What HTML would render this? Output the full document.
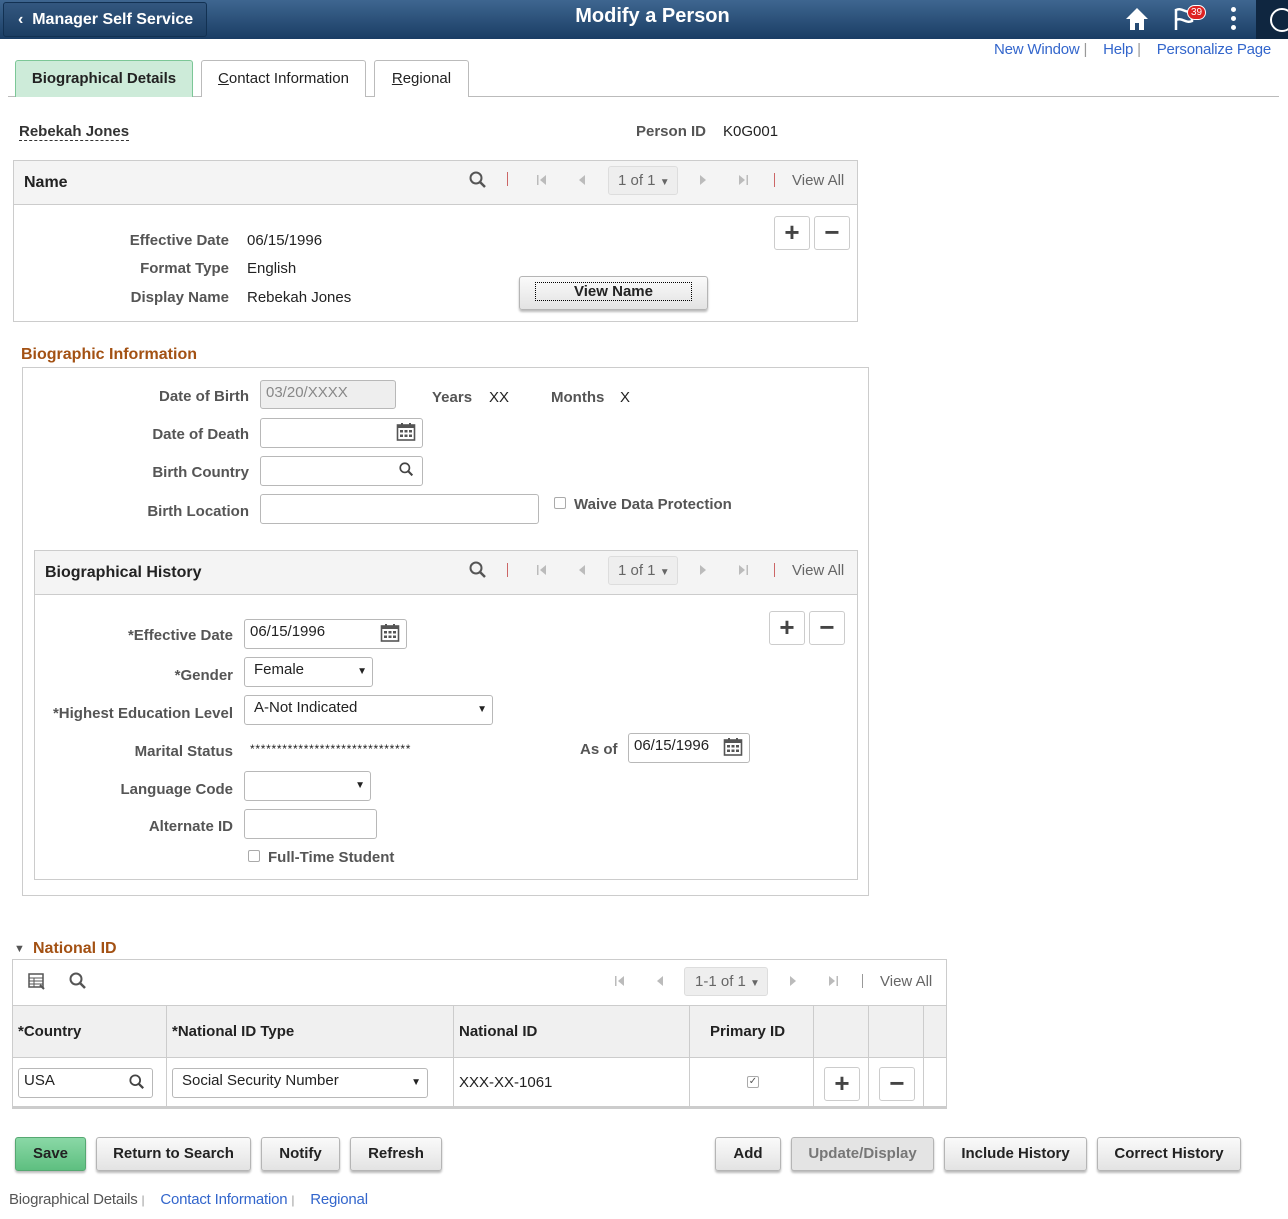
<!DOCTYPE html>
<html><head><meta charset="utf-8"><style>
*{box-sizing:border-box;margin:0;padding:0}
body{width:1288px;height:1219px;position:relative;background:#fff;font-family:"Liberation Sans",Arial,sans-serif;font-size:15px;color:#333;overflow:hidden}
.a{position:absolute}
.lb{position:absolute;font-weight:bold;color:#555;text-align:right;white-space:nowrap}
.v{position:absolute;color:#222;white-space:nowrap}
.in{position:absolute;border:1px solid #b8b8b8;border-radius:3px;background:#fff;font-size:15px;padding:3px 5px;color:#222}
.box{position:absolute;border:1px solid #ccc}
.gh{position:absolute;background:#f4f4f4;border-bottom:1px solid #ccc}
.btn{position:absolute;border:1px solid #b5b5b5;border-radius:3px;background:linear-gradient(#fafafa,#e3e3e3);font-weight:bold;color:#222;text-align:center;box-shadow:0 2px 2px #bbb;font-size:15px}
.pm{position:absolute;width:36px;height:34px;border:1px solid #ccc;border-radius:3px;background:#fff;text-align:center;font-size:26px;line-height:30px;color:#444;font-weight:bold}
.sec{position:absolute;color:#a35113;font-weight:bold;font-size:16px}
.nav{position:absolute;color:#666;font-size:15px}
.lnk{color:#3366cc}
.dd{position:absolute;background:#eee;border:1px solid #ddd;border-radius:3px;color:#666;line-height:27px;height:29px}
</style></head><body>
<svg width="0" height="0" style="position:absolute"><defs>
<symbol id="mag" viewBox="0 0 18 18"><circle cx="7" cy="7" r="5.5" stroke="currentColor" stroke-width="2" fill="none"/><path d="M11 11 L16 16" stroke="currentColor" stroke-width="2.5"/></symbol>
<symbol id="cal" viewBox="0 0 20 20"><rect x="1.5" y="3" width="17" height="15" fill="none" stroke="#555" stroke-width="1.6"/><rect x="1.5" y="3" width="17" height="3" fill="#555"/><rect x="5" y="1" width="2" height="4" fill="#555"/><rect x="13" y="1" width="2" height="4" fill="#555"/><g fill="#555"><rect x="4" y="8" width="3" height="2.5"/><rect x="8.5" y="8" width="3" height="2.5"/><rect x="13" y="8" width="3" height="2.5"/><rect x="4" y="12.5" width="3" height="2.5"/><rect x="8.5" y="12.5" width="3" height="2.5"/><rect x="13" y="12.5" width="3" height="2.5"/></g></symbol>
<symbol id="first" viewBox="0 0 14 14"><rect x="2" y="2" width="1.5" height="10" fill="#bbb"/><path d="M11 2 L5 7 L11 12Z" fill="#bbb"/></symbol>
<symbol id="prev" viewBox="0 0 14 14"><path d="M10 2 L4 7 L10 12Z" fill="#bbb"/></symbol>
<symbol id="next" viewBox="0 0 14 14"><path d="M4 2 L10 7 L4 12Z" fill="#bbb"/></symbol>
<symbol id="last" viewBox="0 0 14 14"><path d="M3 2 L9 7 L3 12Z" fill="#bbb"/><rect x="10.5" y="2" width="1.5" height="10" fill="#bbb"/></symbol>
</defs></svg>

<div class="a" style="left:0;top:0;width:1288px;height:39px;background:linear-gradient(#3e6690,#1a3d64);"></div>
<div class="a" style="left:3px;top:2px;width:204px;height:35px;border:1px solid #123152;border-radius:3px;background:linear-gradient(#33577f,#1c3e63);color:#fff;font-weight:bold;font-size:16px;line-height:33px;padding-left:14px">‹&nbsp;&nbsp;Manager Self Service</div>
<div class="a" style="left:0;width:1305px;top:5px;text-align:center;color:#fff;font-weight:bold;font-size:20px">Modify a Person</div>
<svg class="a" style="left:1124px;top:6px" width="26" height="26" viewBox="0 0 26 26"><path d="M13 2 L2 13 H6 V24 H11 V17 H15 V24 H20 V13 H24 Z" fill="#fff"/></svg>
<svg class="a" style="left:1172px;top:6px" width="24" height="26"><path d="M4 3 V24 M4 4 C10 1 14 8 20 5 V15 C14 18 10 11 4 14" stroke="#fff" stroke-width="2.5" fill="none"/></svg>
<div class="a" style="left:1187px;top:5px;background:#d22;color:#fff;font-size:10px;border-radius:8px;padding:1px 3px;border:1px solid #fff">39</div>
<div class="a" style="left:1231px;top:7px;width:6px"><div style="width:5px;height:5px;border-radius:3px;background:#fff;margin-bottom:4px"></div><div style="width:5px;height:5px;border-radius:3px;background:#fff;margin-bottom:4px"></div><div style="width:5px;height:5px;border-radius:3px;background:#fff"></div></div>
<div class="a" style="left:1256px;top:0;width:32px;height:39px;background:#0f2640"></div>
<div class="a" style="left:1270px;top:8px;width:24px;height:24px;border:2px solid #fff;border-radius:50%"></div>
<div class="a" style="left:994px;top:41px;font-size:15px;letter-spacing:-0.2px"><span class="lnk">New Window</span> <span style="color:#999">|</span>&nbsp;&nbsp;&nbsp; <span class="lnk">Help</span> <span style="color:#999">|</span>&nbsp;&nbsp;&nbsp; <span class="lnk">Personalize Page</span></div>
<div class="a" style="left:8px;top:96px;width:1271px;height:1px;background:#bbb"></div>
<div class="a" style="left:15px;top:60px;width:178px;height:37px;background:#cdebd9;border:1px solid #7cc797;border-bottom:none;border-radius:3px 3px 0 0;font-weight:bold;text-align:center;line-height:35px;color:#222">Biographical Details</div>
<div class="a" style="left:201px;top:60px;width:165px;height:37px;background:#fff;border:1px solid #bbb;border-bottom:none;border-radius:3px 3px 0 0;text-align:center;line-height:35px;color:#222"><u>C</u>ontact Information</div>
<div class="a" style="left:374px;top:60px;width:95px;height:37px;background:#fff;border:1px solid #bbb;border-bottom:none;border-radius:3px 3px 0 0;text-align:center;line-height:35px;color:#222"><u>R</u>egional</div>

<div class="a" style="left:19px;top:123px;font-weight:bold;color:#333;border-bottom:1px dashed #333">Rebekah Jones</div>
<div class="lb" style="left:636px;top:123px">Person ID</div>
<div class="v" style="left:723px;top:123px">K0G001</div>

<!-- Name grid -->
<div class="box" style="left:13px;top:160px;width:845px;height:162px"></div>
<div class="gh" style="left:14px;top:161px;width:843px;height:44px"></div>
<div class="a" style="left:24px;top:174px;font-weight:bold;font-size:16px;color:#222">Name</div>
<svg class="a" style="left:469px;top:171px;color:#555" width="18" height="18"><use href="#mag"/></svg>
<div class="a" style="left:507px;top:172px;width:1px;height:14px;background:#c66"></div>
<svg class="a" style="left:535px;top:173px" width="14" height="14"><use href="#first"/></svg>
<svg class="a" style="left:575px;top:173px" width="14" height="14"><use href="#prev"/></svg>
<div class="dd" style="left:608px;top:166px;width:70px;padding-left:9px">1 of 1 <span style="font-size:10px">▼</span></div>
<svg class="a" style="left:696px;top:173px" width="14" height="14"><use href="#next"/></svg>
<svg class="a" style="left:736px;top:173px" width="14" height="14"><use href="#last"/></svg>
<div class="a" style="left:774px;top:173px;width:1px;height:14px;background:#c66"></div>
<div class="nav" style="left:792px;top:172px">View All</div>
<div class="pm" style="left:774px;top:216px">+</div><div class="pm" style="left:814px;top:216px">−</div>
<div class="lb" style="right:1059px;top:232px">Effective Date</div><div class="v" style="left:247px;top:232px">06/15/1996</div>
<div class="lb" style="right:1059px;top:260px">Format Type</div><div class="v" style="left:247px;top:260px">English</div>
<div class="lb" style="right:1059px;top:289px">Display Name</div><div class="v" style="left:247px;top:289px">Rebekah Jones</div>
<div class="btn" style="left:519px;top:276px;width:189px;height:34px;padding-top:6px"><span style="border:1px dotted #000;padding:0 38px">View Name</span></div>

<div class="sec" style="left:21px;top:346px">Biographic Information</div>
<div class="box" style="left:22px;top:367px;width:847px;height:529px"></div>
<div class="lb" style="right:1039px;top:388px">Date of Birth</div>
<div class="in" style="left:260px;top:380px;width:136px;height:29px;background:#eee;color:#888">03/20/XXXX</div>
<div class="lb" style="left:432px;top:389px">Years</div><div class="v" style="left:489px;top:389px">XX</div>
<div class="lb" style="left:551px;top:389px">Months</div><div class="v" style="left:620px;top:389px">X</div>
<div class="lb" style="right:1039px;top:426px">Date of Death</div>
<div class="in" style="left:260px;top:418px;width:163px;height:30px"></div>
<svg class="a" style="left:396px;top:422px" width="20" height="20"><use href="#cal"/></svg>
<div class="lb" style="right:1039px;top:464px">Birth Country</div>
<div class="in" style="left:260px;top:456px;width:163px;height:30px"></div>
<svg class="a" style="left:399px;top:462px;color:#444" width="15" height="15"><use href="#mag"/></svg>
<div class="lb" style="right:1039px;top:503px">Birth Location</div>
<div class="in" style="left:260px;top:494px;width:279px;height:30px"></div>
<div class="a" style="left:554px;top:497px;width:12px;height:12px;border:1px solid #aaa;border-radius:2px"></div>
<div class="lb" style="left:574px;top:496px">Waive Data Protection</div>

<!-- Biographical History -->
<div class="box" style="left:34px;top:550px;width:824px;height:330px"></div>
<div class="gh" style="left:35px;top:551px;width:822px;height:44px"></div>
<div class="a" style="left:45px;top:564px;font-weight:bold;font-size:16px;color:#222">Biographical History</div>
<svg class="a" style="left:469px;top:561px;color:#555" width="18" height="18"><use href="#mag"/></svg>
<div class="a" style="left:507px;top:563px;width:1px;height:14px;background:#c66"></div>
<svg class="a" style="left:535px;top:563px" width="14" height="14"><use href="#first"/></svg>
<svg class="a" style="left:575px;top:563px" width="14" height="14"><use href="#prev"/></svg>
<div class="dd" style="left:608px;top:556px;width:70px;padding-left:9px">1 of 1 <span style="font-size:10px">▼</span></div>
<svg class="a" style="left:696px;top:563px" width="14" height="14"><use href="#next"/></svg>
<svg class="a" style="left:736px;top:563px" width="14" height="14"><use href="#last"/></svg>
<div class="a" style="left:774px;top:563px;width:1px;height:14px;background:#c66"></div>
<div class="nav" style="left:792px;top:562px">View All</div>
<div class="pm" style="left:769px;top:611px">+</div><div class="pm" style="left:809px;top:611px">−</div>
<div class="lb" style="right:1055px;top:627px">*Effective Date</div>
<div class="in" style="left:244px;top:619px;width:163px;height:30px">06/15/1996</div>
<svg class="a" style="left:380px;top:623px" width="20" height="20"><use href="#cal"/></svg>
<div class="lb" style="right:1055px;top:667px">*Gender</div>
<div class="in" style="left:244px;top:657px;width:129px;height:30px;padding-left:9px">Female<span style="position:absolute;right:5px;font-size:10px;top:8px">▼</span></div>
<div class="lb" style="right:1055px;top:705px">*Highest Education Level</div>
<div class="in" style="left:244px;top:695px;width:249px;height:30px;padding-left:9px">A-Not Indicated<span style="position:absolute;right:5px;font-size:10px;top:8px">▼</span></div>
<div class="lb" style="right:1055px;top:743px">Marital Status</div>
<div class="v" style="left:250px;top:742px;font-size:12px;letter-spacing:0.7px">******************************</div>
<div class="lb" style="left:580px;top:741px">As of</div>
<div class="in" style="left:628px;top:733px;width:122px;height:30px">06/15/1996</div>
<svg class="a" style="left:723px;top:737px" width="20" height="20"><use href="#cal"/></svg>
<div class="lb" style="right:1055px;top:781px">Language Code</div>
<div class="in" style="left:244px;top:771px;width:127px;height:30px"><span style="position:absolute;right:5px;font-size:10px;top:8px">▼</span></div>
<div class="lb" style="right:1055px;top:818px">Alternate ID</div>
<div class="in" style="left:244px;top:809px;width:133px;height:30px"></div>
<div class="a" style="left:248px;top:850px;width:12px;height:12px;border:1px solid #aaa;border-radius:2px"></div>
<div class="lb" style="left:268px;top:849px">Full-Time Student</div>

<!-- National ID -->
<div class="a" style="left:14px;top:943px;font-size:11px;color:#555">▼</div>
<div class="sec" style="left:33px;top:940px">National ID</div>
<div class="box" style="left:12px;top:959px;width:935px;height:150px;border-color:#ccc"></div>
<svg class="a" style="left:28px;top:973px" width="18" height="18" viewBox="0 0 18 18"><rect x="1" y="1" width="14" height="13" fill="none" stroke="#555" stroke-width="1.5"/><path d="M1 5 H15 M1 8 H15 M1 11 H15 M6 5 V14" stroke="#555"/><path d="M12 12 L16 16" stroke="#555" stroke-width="2"/></svg>
<svg class="a" style="left:69px;top:972px;color:#555" width="18" height="18"><use href="#mag"/></svg>
<svg class="a" style="left:613px;top:974px" width="14" height="14"><use href="#first"/></svg>
<svg class="a" style="left:653px;top:974px" width="14" height="14"><use href="#prev"/></svg>
<div class="dd" style="left:684px;top:967px;width:84px;padding-left:10px">1-1 of 1 <span style="font-size:10px">▼</span></div>
<svg class="a" style="left:786px;top:974px" width="14" height="14"><use href="#next"/></svg>
<svg class="a" style="left:826px;top:974px" width="14" height="14"><use href="#last"/></svg>
<div class="a" style="left:862px;top:974px;width:1px;height:14px;background:#999"></div>
<div class="nav" style="left:880px;top:973px">View All</div>
<div class="a" style="left:13px;top:1005px;width:933px;height:53px;background:#f0f0f0;border-top:1px solid #ccc;border-bottom:1px solid #ccc"></div>
<div class="a" style="left:13px;top:1106px;width:933px;height:2px;background:#ccc"></div>
<div class="a" style="left:166px;top:1005px;width:1px;height:102px;background:#ccc"></div>
<div class="a" style="left:453px;top:1005px;width:1px;height:102px;background:#ccc"></div>
<div class="a" style="left:689px;top:1005px;width:1px;height:102px;background:#ccc"></div>
<div class="a" style="left:813px;top:1005px;width:1px;height:102px;background:#ccc"></div>
<div class="a" style="left:868px;top:1005px;width:1px;height:102px;background:#ccc"></div>
<div class="a" style="left:923px;top:1005px;width:1px;height:102px;background:#ccc"></div>
<div class="a" style="left:18px;top:1023px;font-weight:bold;color:#222">*Country</div>
<div class="a" style="left:172px;top:1023px;font-weight:bold;color:#222">*National ID Type</div>
<div class="a" style="left:459px;top:1023px;font-weight:bold;color:#222">National ID</div>
<div class="a" style="left:710px;top:1023px;font-weight:bold;color:#222">Primary ID</div>
<div class="in" style="left:18px;top:1068px;width:135px;height:30px">USA</div>
<svg class="a" style="left:129px;top:1074px;color:#444" width="16" height="16"><use href="#mag"/></svg>
<div class="in" style="left:172px;top:1068px;width:256px;height:30px;padding-left:9px">Social Security Number<span style="position:absolute;right:6px;font-size:10px;top:8px">▼</span></div>
<div class="v" style="left:459px;top:1074px">XXX-XX-1061</div>
<div class="a" style="left:747px;top:1076px;width:12px;height:12px;border:1px solid #aaa;border-radius:2px;font-size:10px;line-height:10px;color:#555;text-align:center">✓</div>
<div class="pm" style="left:824px;top:1067px">+</div><div class="pm" style="left:879px;top:1067px">−</div>

<div class="btn" style="left:15px;top:1137px;width:71px;height:34px;line-height:32px;background:linear-gradient(#8ad8a6,#5ebf80);border-color:#56a872">Save</div>
<div class="btn" style="left:96px;top:1137px;width:155px;height:34px;line-height:32px">Return to Search</div>
<div class="btn" style="left:261px;top:1137px;width:79px;height:34px;line-height:32px">Notify</div>
<div class="btn" style="left:350px;top:1137px;width:92px;height:34px;line-height:32px">Refresh</div>
<div class="btn" style="left:715px;top:1137px;width:66px;height:34px;line-height:32px">Add</div>
<div class="btn" style="left:791px;top:1137px;width:143px;height:34px;line-height:32px;color:#777;background:#e4e4e4">Update/Display</div>
<div class="btn" style="left:944px;top:1137px;width:143px;height:34px;line-height:32px">Include History</div>
<div class="btn" style="left:1097px;top:1137px;width:144px;height:34px;line-height:32px">Correct History</div>
<div class="a" style="left:9px;top:1191px;color:#555;letter-spacing:-0.2px">Biographical Details <span style="color:#999;font-size:12px">|</span>&nbsp;&nbsp;&nbsp; <span class="lnk">Contact Information</span> <span style="color:#999;font-size:12px">|</span>&nbsp;&nbsp;&nbsp; <span class="lnk">Regional</span></div>
</body></html>
